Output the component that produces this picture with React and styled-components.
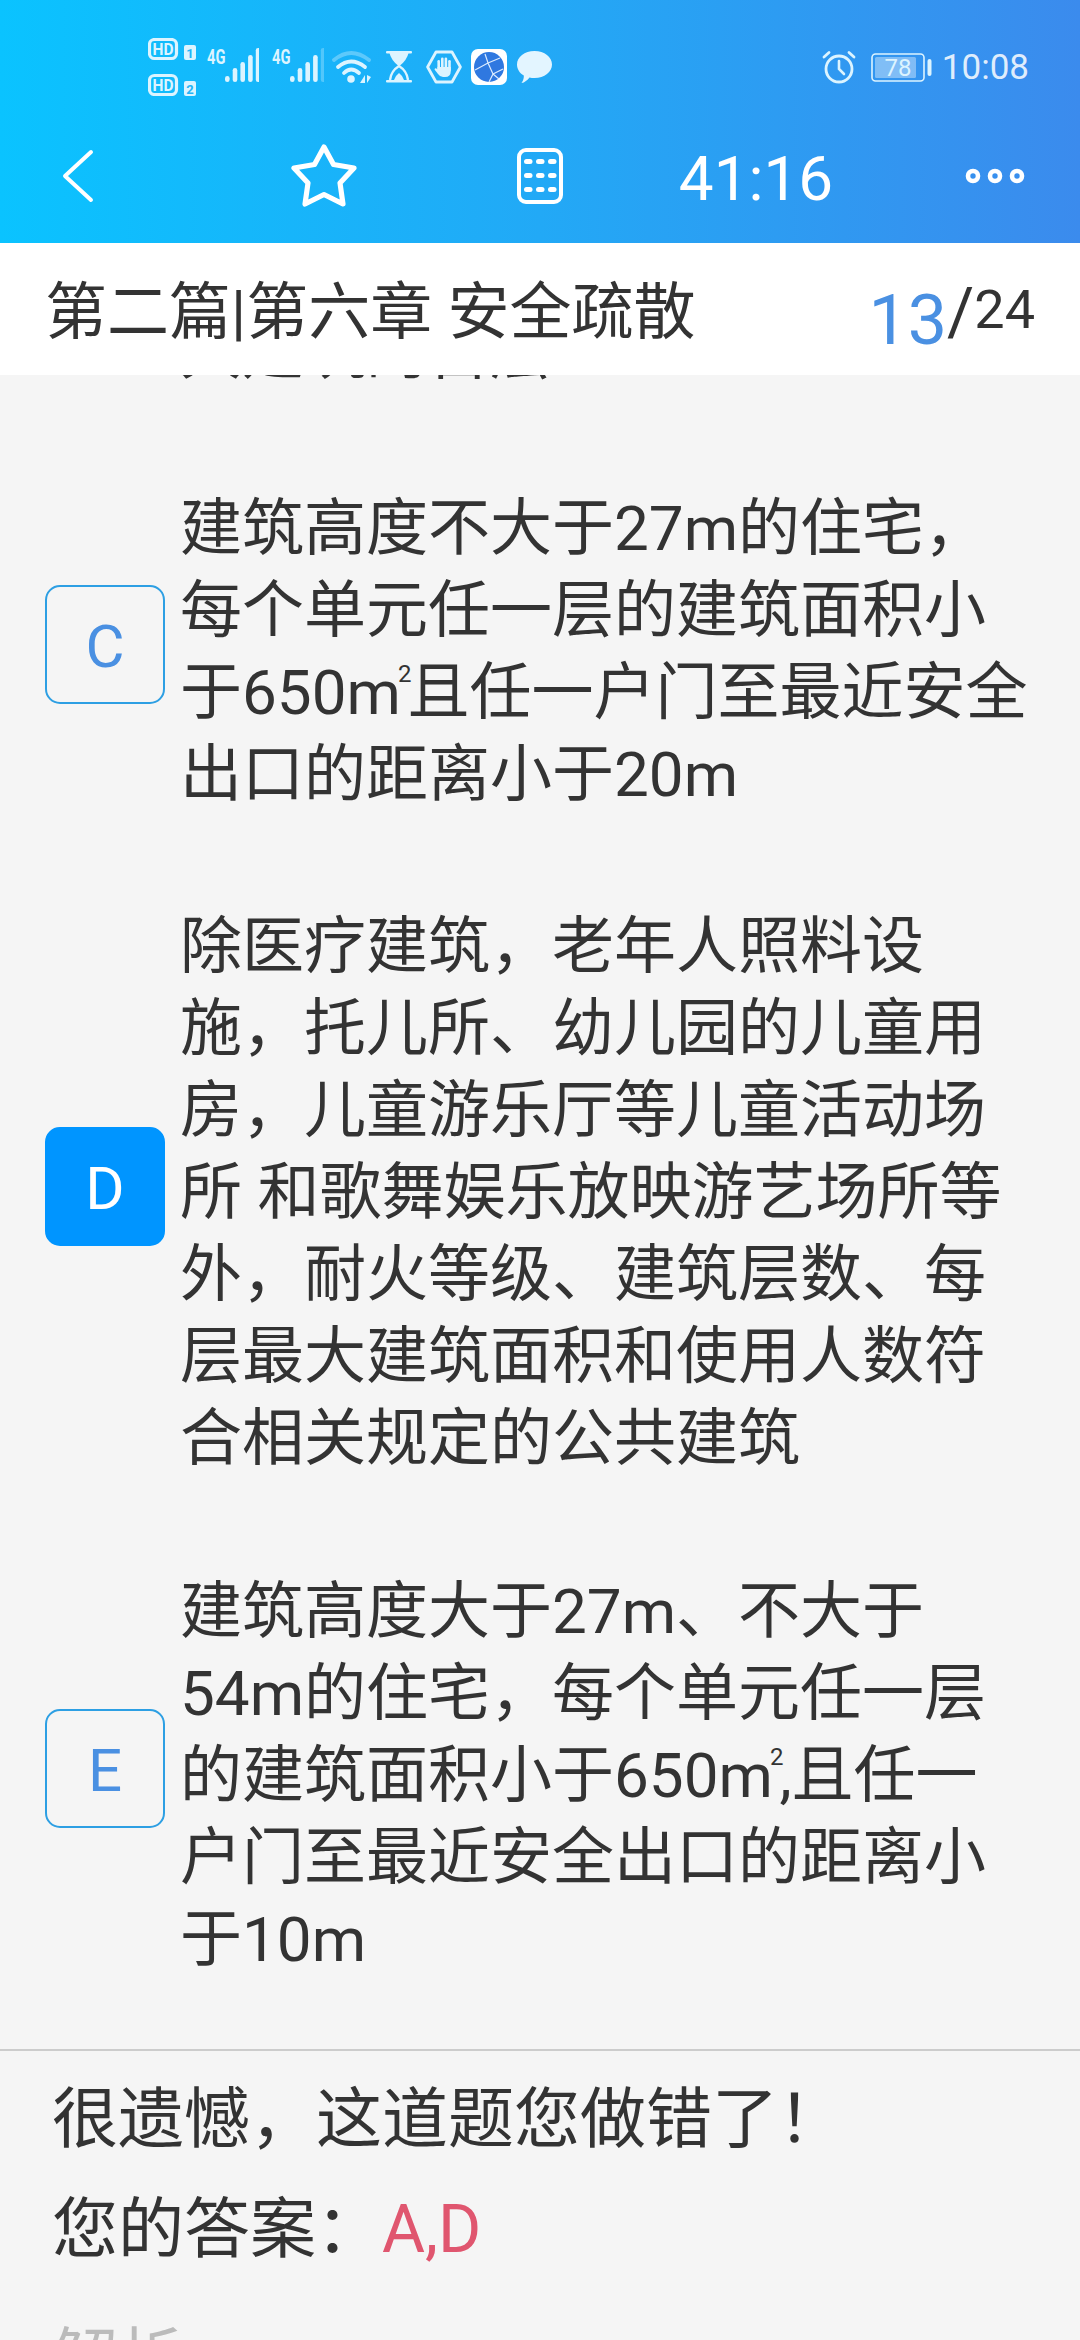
import React from "react";
import styled, { createGlobalStyle } from "styled-components";

const Global = createGlobalStyle`
  html, body { margin: 0; padding: 0; background: #f5f5f5; }
  body { font-family: Roboto, "Noto Sans CJK SC", sans-serif; color: #333; }
  * { box-sizing: border-box; }
`;

const Page = styled.div`
  width: 1080px;
  height: 2340px;
  display: flex;
  flex-direction: column;
  overflow: hidden;
  background: #f5f5f5;
`;
const Header = styled.header`
  height: 243px;
  flex: none;
  background: linear-gradient(90deg, #0ac3ff 0%, #22a9f6 50%, #3b8bed 100%);
  color: #fff;
`;
const StatusBar = styled.div`
  height: 134px;
  display: flex;
  align-items: center;
  padding: 0 51px 0 148px;
`;
const StatusIcon = styled.svg`
  display: block;
  flex: none;
  margin-left: ${(p) => p.$gap || 0}px;
  margin-bottom: ${(p) => p.$mb || 0}px;
`;
const StatusRight = styled.div`
  margin-left: auto;
  display: flex;
  align-items: center;
`;
const Clock = styled.span`
  margin-left: 10px;
  padding-top: 2px;
  font-size: 35px;
  line-height: 40px;
  color: rgba(255, 255, 255, 0.85);
`;
const NavBar = styled.nav`
  height: 84px;
  display: grid;
  grid-template-columns: repeat(5, 1fr);
  align-items: center;
  justify-items: center;
`;
const NavIcon = styled.svg`
  display: block;
  justify-self: ${(p) => p.$align || "center"};
  margin-left: ${(p) => p.$ml || 0}px;
  margin-right: ${(p) => p.$mr || 0}px;
`;
const Timer = styled.div`
  font-size: 62px;
  line-height: 70px;
  padding-top: 5px;
`;
const TitleBar = styled.div`
  height: 132px;
  flex: none;
  background: #fff;
  display: flex;
  align-items: center;
  justify-content: space-between;
  padding: 0 45px 0 45px;
`;
const Title = styled.h1`
  margin: 8px 0 0;
  font-size: 62px;
  font-weight: 400;
  line-height: 80px;
  color: #333;
  white-space: nowrap;
`;
const Counter = styled.div`
  white-space: nowrap;
  line-height: 90px;
  font-size: 70px;
  margin-top: 12px;
`;
const Current = styled.span`
  color: #4a90e2;
  font-size: 70px;
`;
const Slash = styled.span`
  color: #333;
  font-size: 66px;
  vertical-align: 9px;
`;
const Total = styled.span`
  color: #333;
  font-size: 54px;
  vertical-align: 16px;
`;
const Scroller = styled.main`
  flex: 1;
  min-height: 0;
  overflow: hidden;
`;
const Options = styled.section`
  margin-top: -63px;
  padding: 0 0 68px 45px;
  display: flex;
  flex-direction: column;
  gap: 90.5px;
`;
const OptionRow = styled.div`
  display: flex;
  align-items: center;
  gap: 15px;
`;
const Badge = styled.div`
  width: 120px;
  height: 119px;
  flex: none;
  margin-bottom: 14px;
  padding-top: 4px;
  border-radius: 15px;
  border: 2px solid #2d9fe3;
  background: ${(p) => (p.$selected ? "#0095ff" : "transparent")};
  border-color: ${(p) => (p.$selected ? "#0095ff" : "#2d9fe3")};
  color: ${(p) => (p.$selected ? "#fff" : "#4a90e2")};
  font-size: 60px;
  display: flex;
  align-items: center;
  justify-content: center;
`;
const OptionText = styled.div`
  font-size: 62px;
  line-height: 82px;
  color: #333;
  margin-left: ${(p) => p.$indent || 0}px;
  margin-bottom: ${(p) => p.$mb || 0}px;
`;
const Line = styled.div`
  white-space: nowrap;
`;
const Sup = styled.sup`
  font-size: 24px;
  line-height: 0;
  vertical-align: 32px;
  margin: 0 -4px 0 -3px;
`;
const Result = styled.section`
  border-top: 2px solid #ccc;
  padding: 14px 0 0 52px;
`;
const ResultLine = styled.div`
  font-size: 66px;
  line-height: 110px;
  color: ${(p) => (p.$muted ? "#bbb" : "#333")};
  white-space: nowrap;
  margin-top: ${(p) => p.$mt || 0}px;
`;
const Wrong = styled.span`
  color: #e0566f;
`;

const LIGHT = "#dcf4ff";

const HdIcon = () => (
  <StatusIcon width="48" height="58" viewBox="0 0 48 58">
    {[0, 36].map((y, i) => (
      <g key={y} transform={`translate(0 ${y})`}>
        <rect x="1.5" y="1.5" width="27" height="19" rx="5" fill="none" stroke={LIGHT} strokeWidth="3.2" />
        <text x="15" y="17" textAnchor="middle" fontFamily="Roboto" fontWeight="700" fontSize="16" textLength="21" lengthAdjust="spacingAndGlyphs" fill={LIGHT}>HD</text>
        <rect x="36" y="7" width="12" height="15" rx="2" fill={LIGHT} />
        <text x="42" y="19.5" textAnchor="middle" fontFamily="Roboto" fontWeight="700" fontSize="13" fill="#22b4f8">{i + 1}</text>
      </g>
    ))}
  </StatusIcon>
);

const Signal = ({ gap, dim }) => {
  const bars = [6, 14, 20, 27, 34];
  return (
    <StatusIcon $gap={gap} $mb={6} width="52" height="44" viewBox="0 -6 52 44">
      <text x="0" y="16" fontFamily="Roboto" fontWeight="700" fontSize="21" textLength="18.5" lengthAdjust="spacingAndGlyphs" fill={LIGHT}>4G</text>
      {bars.map((h, i) => (
        <rect key={i} x={18 + i * 7.7} y={34 - h} width="4.6" height={h} rx="2.3" fill={LIGHT} opacity={dim && i === 4 ? 0.3 : 1} />
      ))}
    </StatusIcon>
  );
};

const Wifi = () => (
  <StatusIcon $gap={8} width="39" height="32" viewBox="0 0 39 32" fill="none" stroke={LIGHT} strokeLinecap="round">
    <path d="M2 9 Q19 -5 37 9" strokeWidth="3.8" opacity="0.35" />
    <path d="M6 16 Q19 5 33 16" strokeWidth="3.8" />
    <path d="M12 22 Q19 15 27 22" strokeWidth="3.8" />
    <circle cx="19" cy="28" r="3.8" fill={LIGHT} stroke="none" />
    <path d="M33 24 L33 32 L28 32 Z M35 24 L35 32 L39 26 Z" fill={LIGHT} stroke="none" />
  </StatusIcon>
);

const Hourglass = () => (
  <StatusIcon $gap={15} width="26" height="32" viewBox="0 0 26 32" fill="none">
    <rect x="0" y="0" width="26" height="2.6" rx="1" fill={LIGHT} />
    <rect x="0" y="29" width="26" height="2.6" rx="1" fill={LIGHT} />
    <path d="M3.5 2 H22.5 Q21 9 13.5 15 H12.5 Q5 9 3.5 2 Z" fill={LIGHT} />
    <path d="M4 29 Q5 20 13 15 Q21 20 22 29" stroke={LIGHT} strokeWidth="2.4" />
    <path d="M8 29 Q10 24 13 22 Q16 24 18 29 Z" fill={LIGHT} />
  </StatusIcon>
);

const HandHex = () => (
  <StatusIcon $gap={14} width="36" height="34" viewBox="0 0 36 34" fill="none">
    <path d="M10 2 H26 L34.4 17 L26 32 H10 L1.6 17 Z" stroke={LIGHT} strokeWidth="2.8" strokeLinejoin="round" />
    <g fill={LIGHT}>
      <rect x="11.4" y="10" width="2.6" height="11" rx="1.3" />
      <rect x="15" y="7.5" width="2.6" height="12" rx="1.3" />
      <rect x="18.6" y="7.5" width="2.6" height="12" rx="1.3" />
      <rect x="22.2" y="10" width="2.6" height="11" rx="1.3" />
      <path d="M11.4 17 H24.8 V21 Q24.8 27 19 27 H17 Q14 27 12 24 L8.5 19.5 Q9 17.5 10.8 18.7 L11.4 19.4 Z" />
    </g>
  </StatusIcon>
);

const Browser = () => (
  <StatusIcon $gap={9} width="36" height="36" viewBox="0 0 36 36" fill="none">
    <rect width="36" height="36" rx="7" fill="#fff" />
    <circle cx="18" cy="18" r="15" fill="#2f78e0" />
    <path d="M14 5 L17 14 L29 9 M17 14 L4 21 M17 14 L22 25 L18 33 M22 25 L32 20 M22 25 L28 30" stroke="#dcecff" strokeWidth="1.2" />
  </StatusIcon>
);

const Bubble = () => (
  <StatusIcon $gap={10} width="35" height="33" viewBox="0 0 35 33">
    <path d="M17.5 0 C27.5 0 35 6 35 13.5 C35 21 27.5 27 17.5 27 C15.5 27 14 26.8 12.5 26.4 C10.5 29 7.5 31.5 4.5 32 C6.5 29.5 7 26.5 6.8 24.6 C2.6 22 0 18 0 13.5 C0 6 7.5 0 17.5 0 Z" fill="#e3f5ff" />
  </StatusIcon>
);

const Alarm = () => (
  <StatusIcon width="34" height="34" viewBox="0 0 34 34" fill="none" stroke={LIGHT} strokeLinecap="round">
    <circle cx="17" cy="19" r="13" strokeWidth="2.8" />
    <path d="M17 11 V19 L22 24" strokeWidth="2.6" />
    <path d="M2 7 L7 2.5 M32 7 L27 2.5" strokeWidth="2.8" />
  </StatusIcon>
);

const Battery = () => (
  <StatusIcon $gap={15} width="61" height="29" viewBox="0 0 61 29" fill="none">
    <rect x="1" y="1" width="52" height="27" rx="3.5" stroke={LIGHT} strokeWidth="1.6" />
    <rect x="4" y="4" width="41" height="21" rx="1.5" fill="#fff" opacity="0.38" />
    <rect x="56.5" y="6" width="4" height="17" rx="2" fill={LIGHT} />
    <text x="27" y="23" textAnchor="middle" fontFamily="Roboto" fontSize="24" fill={LIGHT}>78</text>
  </StatusIcon>
);

const Back = () => (
  <NavIcon $align="start" $ml={62} width="32" height="54" viewBox="0 0 32 54" fill="none" stroke="#fff" strokeWidth="4" strokeLinecap="round" strokeLinejoin="round">
    <path d="M29 3 L3 27 L29 51" />
  </NavIcon>
);
const Star = () => (
  <NavIcon width="68" height="64" viewBox="0 0 68 64" fill="none" stroke="#fff" strokeWidth="5.2" strokeLinejoin="round">
    <path d="M34 3 L43.5 20.5 L64 24 L50 39 L53 60 L34 50.5 L15 60 L18 39 L4 24 L24.5 20.5 Z" />
  </NavIcon>
);
const Sheet = () => (
  <NavIcon width="46" height="56" viewBox="0 0 46 56" fill="none">
    <rect x="2" y="2" width="42" height="52" rx="7" stroke="#fff" strokeWidth="4" />
    {[11, 25, 39].map((y) =>
      [7, 19, 31].map((x) => <rect key={`${x}-${y}`} x={x} y={y} width="8.5" height="5" rx="2.5" fill="#fff" />)
    )}
  </NavIcon>
);
const More = () => (
  <NavIcon $align="end" $mr={55} width="60" height="16" viewBox="0 0 60 16" fill="none" stroke="#fff" strokeWidth="4.6">
    <circle cx="8" cy="8" r="5" />
    <circle cx="30" cy="8" r="5" />
    <circle cx="52" cy="8" r="5" />
  </NavIcon>
);

export default function App() {
  return (
    <Page>
      <Global />
      <Header>
        <StatusBar>
          <HdIcon />
          <Signal gap={11} />
          <Signal gap={13} dim />
          <Wifi />
          <Hourglass />
          <HandHex />
          <Browser />
          <Bubble />
          <StatusRight>
            <Alarm />
            <Battery />
            <Clock>10:08</Clock>
          </StatusRight>
        </StatusBar>
        <NavBar>
          <Back />
          <Star />
          <Sheet />
          <Timer>41:16</Timer>
          <More />
        </NavBar>
      </Header>
      <TitleBar>
        <Title>第二篇|第六章 安全疏散</Title>
        <Counter>
          <Current>13</Current>
          <Slash>/</Slash>
          <Total>24</Total>
        </Counter>
      </TitleBar>
      <Scroller>
        <Options>
          <OptionText $indent={135} $mb={3}>
            <Line>大建筑的首层</Line>
          </OptionText>
          <OptionRow>
            <Badge>C</Badge>
            <OptionText>
              <Line>建筑高度不大于27m的住宅，</Line>
              <Line>每个单元任一层的建筑面积小</Line>
              <Line>于650m<Sup>2</Sup>且任一户门至最近安全</Line>
              <Line>出口的距离小于20m</Line>
            </OptionText>
          </OptionRow>
          <OptionRow>
            <Badge $selected>D</Badge>
            <OptionText>
              <Line>除医疗建筑，老年人照料设</Line>
              <Line>施，托儿所、幼儿园的儿童用</Line>
              <Line>房，儿童游乐厅等儿童活动场</Line>
              <Line>所 和歌舞娱乐放映游艺场所等</Line>
              <Line>外，耐火等级、建筑层数、每</Line>
              <Line>层最大建筑面积和使用人数符</Line>
              <Line>合相关规定的公共建筑</Line>
            </OptionText>
          </OptionRow>
          <OptionRow>
            <Badge>E</Badge>
            <OptionText>
              <Line>建筑高度大于27m、不大于</Line>
              <Line>54m的住宅，每个单元任一层</Line>
              <Line>的建筑面积小于650m<Sup>2</Sup>,且任一</Line>
              <Line>户门至最近安全出口的距离小</Line>
              <Line>于10m</Line>
            </OptionText>
          </OptionRow>
        </Options>
        <Result>
          <ResultLine>很遗憾，这道题您做错了！</ResultLine>
          <ResultLine>您的答案：<Wrong>A,D</Wrong></ResultLine>
          <ResultLine $muted $mt={20}>解析</ResultLine>
        </Result>
      </Scroller>
    </Page>
  );
}
